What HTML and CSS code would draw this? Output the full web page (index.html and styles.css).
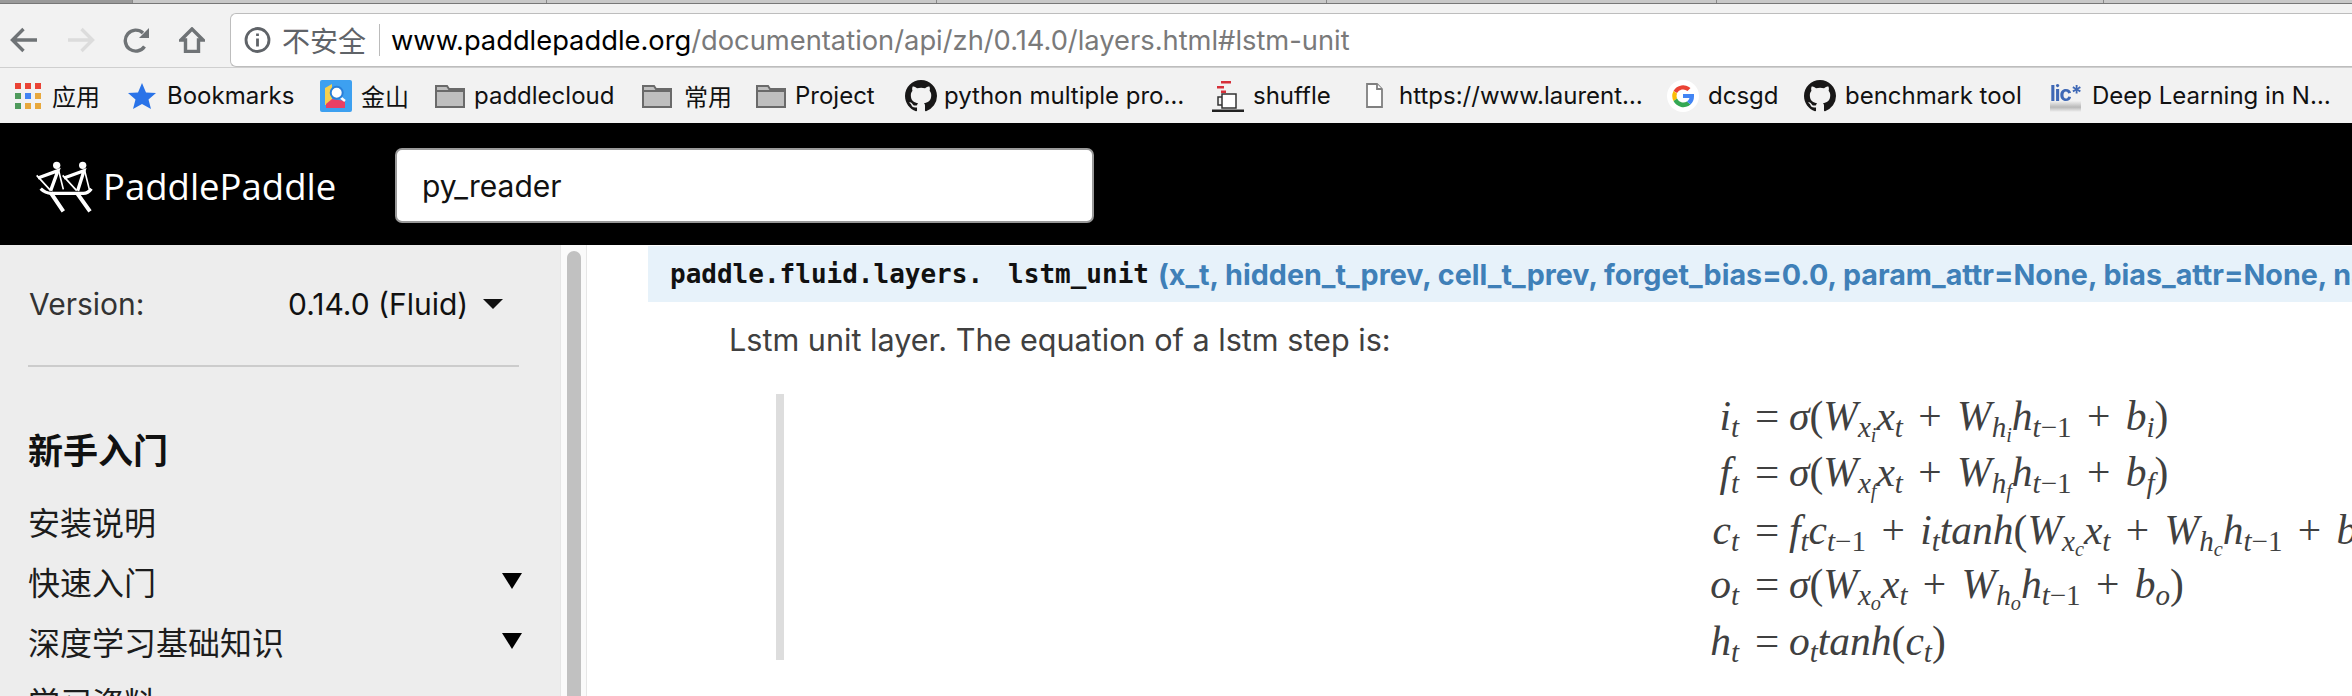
FILE: index.html
```html
<!DOCTYPE html>
<html lang="zh">
<head>
<meta charset="utf-8">
<title>PaddlePaddle</title>
<link rel="stylesheet" href="styles.css">
</head>
<body>
<div class="tabstrip"><div class="tab tab-a"></div><div class="tab tab-b"></div><div class="tab tab-c"></div><div class="tab tab-c"></div><div class="tab tab-c"></div><div class="tab tab-d"></div><div class="tab tab-e"></div></div>
<div class="toolbar">
  <div class="navs">
    <svg class="nav back" viewBox="0 0 28 26"><path d="M27 13H3M13.500 2L2.500 13L13.500 24"/></svg>
    <svg class="nav fwd" viewBox="0 0 28 26"><path d="M1 13H25M14.500 2L25.500 13L14.500 24"/></svg>
    <svg class="nav reload" viewBox="0 0 28 26"><path d="M22.500 19.500A10.500 10.500 0 1 1 21 6"/><path class="fill" d="M27 1V11H17Z"/></svg>
    <svg class="nav home" viewBox="0 0 26 26"><path d="M13 2L2 13H6.500V24.500H19.500V13H24Z"/></svg>
  </div>
  <div class="omnibox">
    <svg class="info" viewBox="0 0 26 26"><circle cx="13" cy="13" r="11.500"/><path d="M13 11.500V19.500M13 6.500V9"/></svg>
    <span class="insecure">不安全</span>
    <span class="divider"></span>
    <span class="url"><b>www.paddlepaddle.org</b>/documentation/api/zh/0.14.0/layers.html#lstm-unit</span>
  </div>
</div>
<div class="bookmarks">
  <div class="bm bm-apps">
    <svg class="ic-apps" viewBox="0 0 26 26">
      <rect class="r" x="0" y="0" width="6" height="6"/><rect class="r" x="10" y="0" width="6" height="6"/><rect class="r" x="20" y="0" width="6" height="6"/>
      <rect class="g" x="0" y="10" width="6" height="6"/><rect class="b" x="10" y="10" width="6" height="6"/><rect class="y" x="20" y="10" width="6" height="6"/>
      <rect class="g" x="0" y="20" width="6" height="6"/><rect class="y" x="10" y="20" width="6" height="6"/><rect class="y" x="20" y="20" width="6" height="6"/>
    </svg>
    <span>应用</span>
  </div>
  <div class="bm bm-star">
    <svg class="ic-star" viewBox="0 0 28 26"><path d="M14 0L18 9.500L28 10L20.500 16.500L23 26L14 21L5 26L7.500 16.500L0 10L10 9.500Z"/></svg>
    <span>Bookmarks</span>
  </div>
  <div class="bm bm-ks">
    <svg class="ic-ks" viewBox="0 0 32 32">
      <rect width="32" height="32" rx="2" fill="#3da0f0"/>
      <path d="M5 8L12 4V25H5Z" fill="#f6d04d"/>
      <path d="M6 28V24L12 19L25 21V28Z" fill="#ea3f64"/>
      <path d="M20 17L25 21" stroke="#fff" stroke-width="2.500"/>
      <circle cx="16.700" cy="12.700" r="6" fill="#fff" stroke="#2a7fd8" stroke-width="2"/>
    </svg>
    <span>金山</span>
  </div>
  <div class="bm bm-f1">
    <svg class="ic-folder" viewBox="0 0 30 24"><path d="M1 23V2H12L14 5H29V23Z"/><path class="ln" d="M1 7H29"/></svg>
    <span>paddlecloud</span>
  </div>
  <div class="bm bm-f2">
    <svg class="ic-folder" viewBox="0 0 30 24"><path d="M1 23V2H12L14 5H29V23Z"/><path class="ln" d="M1 7H29"/></svg>
    <span>常用</span>
  </div>
  <div class="bm bm-f3">
    <svg class="ic-folder" viewBox="0 0 30 24"><path d="M1 23V2H12L14 5H29V23Z"/><path class="ln" d="M1 7H29"/></svg>
    <span>Project</span>
  </div>
  <div class="bm bm-gh1">
    <svg class="ic-gh" viewBox="0 0 16 16"><path d="M8 0C3.580 0 0 3.580 0 8c0 3.540 2.290 6.530 5.470 7.590.4.070.55-.170.55-.380 0-.190-.010-.820-.010-1.490-2.010.370-2.530-.490-2.690-.940-.090-.230-.480-.940-.820-1.130-.280-.150-.680-.520-.010-.530.630-.010 1.080.580 1.230.820.720 1.210 1.870.870 2.330.660.070-.520.280-.870.510-1.070-1.780-.200-3.640-.890-3.640-3.950 0-.870.310-1.590.820-2.150-.080-.200-.360-1.020.080-2.120 0 0 .670-.210 2.200.820.640-.180 1.320-.270 2-.270.680 0 1.360.090 2 .270 1.530-1.040 2.200-.820 2.200-.820.440 1.100.160 1.920.080 2.120.510.560.820 1.270.820 2.150 0 3.070-1.870 3.750-3.650 3.950.290.250.540.730.540 1.480 0 1.070-.010 1.930-.010 2.200 0 .210.150.460.550.380A8.013 8.013 0 0 0 16 8c0-4.420-3.580-8-8-8z"/></svg>
    <span>python multiple pro…</span>
  </div>
  <div class="bm bm-sh">
    <svg class="ic-shuffle" viewBox="0 0 32 32">
      <path d="M9 1H19V3.500H9ZM5 6H12V8.500H5ZM9 10.500H14V13H9Z" fill="#d6303a"/>
      <path d="M10 14H24V28H10Z" fill="#fff" stroke="#333" stroke-width="1.500"/>
      <path d="M10 17H6V25H10" fill="none" stroke="#333" stroke-width="1.500"/>
      <path d="M0 29.500H32V32H0Z" fill="#222"/>
    </svg>
    <span>shuffle</span>
  </div>
  <div class="bm bm-doc">
    <svg class="ic-doc" viewBox="0 0 17 25"><path d="M1 1H11L16 6V24H1Z"/><path d="M11 1V6H16"/></svg>
    <span>https://www.laurent…</span>
  </div>
  <div class="bm bm-g">
    <svg class="ic-g" viewBox="0 0 32 32">
      <circle cx="16" cy="16" r="16" fill="#fff"/>
      <path d="M6.500 11A11 11 0 0 1 23.500 8L20.500 11A7 7 0 0 0 10 13Z" fill="#ea4335"/>
      <path d="M6.500 11L10 13.500A7 7 0 0 0 10 18.500L6.500 21A11 11 0 0 1 6.500 11Z" fill="#fbbc05"/>
      <path d="M6.500 21L10 18.500A7 7 0 0 0 20 21.500L23.500 24.500A11 11 0 0 1 6.500 21Z" fill="#34a853"/>
      <path d="M16 14H27V16.500A11 11 0 0 1 23.500 24.500L20 21.500A7 7 0 0 0 22.500 18H16Z" fill="#4285f4"/>
    </svg>
    <span>dcsgd</span>
  </div>
  <div class="bm bm-gh2">
    <svg class="ic-gh" viewBox="0 0 16 16"><path d="M8 0C3.580 0 0 3.580 0 8c0 3.540 2.290 6.530 5.470 7.590.4.070.55-.170.55-.380 0-.190-.010-.820-.010-1.490-2.010.370-2.530-.490-2.690-.940-.090-.230-.480-.940-.820-1.130-.280-.150-.680-.520-.010-.530.630-.010 1.080.580 1.230.820.720 1.210 1.870.870 2.330.660.070-.520.280-.870.510-1.070-1.780-.200-3.640-.890-3.640-3.950 0-.870.310-1.590.820-2.150-.080-.200-.360-1.020.080-2.120 0 0 .670-.210 2.200.820.640-.180 1.320-.270 2-.270.680 0 1.360.090 2 .270 1.530-1.040 2.200-.820 2.200-.820.440 1.100.160 1.920.080 2.120.510.560.820 1.270.820 2.150 0 3.070-1.870 3.750-3.650 3.950.290.250.540.730.540 1.480 0 1.070-.010 1.930-.010 2.200 0 .210.150.460.550.380A8.013 8.013 0 0 0 16 8c0-4.420-3.580-8-8-8z"/></svg>
    <span>benchmark tool</span>
  </div>
  <div class="bm bm-lic">
    <span class="ic-lic">lic*</span>
    <span>Deep Learning in N…</span>
  </div>
</div>
<header class="site-head">
  <svg class="logo" viewBox="0 0 210 180">
    <circle cx="80" cy="28" r="11"/><circle cx="158" cy="28" r="11"/>
    <path class="mid" d="M24 66L84 44L62 104M102 66L162 44L143 104"/>
    <path class="thin" d="M20 58L62 104M98 58L140 104M86 44L100 100M164 44L178 100"/>
    <path class="mid" d="M32 98Q46 112 64 112H160Q174 112 184 98"/>
    <path class="oar" d="M62 110L100 166M140 110L180 166"/>
  </svg>
  <span class="brand">PaddlePaddle</span>
  <div class="search">py_reader</div>
</header>
<div class="page">
  <aside class="side">
    <div class="version">
      <span class="v-label">Version:</span>
      <span class="v-val">0.14.0 (Fluid)</span>
      <span class="caret"></span>
    </div>
    <div class="rule"></div>
    <h3 class="nav-title">新手入门</h3>
    <ul class="nav-list">
      <li>安装说明</li>
      <li>快速入门<span class="arrow"></span></li>
      <li>深度学习基础知识<span class="arrow"></span></li>
      <li>学习资料</li>
    </ul>
  </aside>
  <div class="track"><div class="thumb"></div></div>
  <main class="main">
    <div class="sig"><code class="pre">paddle.fluid.layers.</code><code class="fn">lstm_unit</code><span class="params">(x_t, hidden_t_prev, cell_t_prev, forget_bias=0.0, param_attr=None, bias_attr=None, name=None)</span></div>
    <p class="desc">Lstm unit layer. The equation of a lstm step is:</p>
    <div class="quote">
      <div class="math">
        <div class="row r1"><span class="lhs"><i>i<sub>t</sub></i></span><span class="eq">=</span><span class="rhs"><i>σ</i>(<i>W<sub>x<sub>i</sub></sub>x<sub>t</sub></i> + <i>W<sub>h<sub>i</sub></sub>h<sub>t</sub></i><sub class="up">−1</sub> + <i>b<sub>i</sub></i>)</span></div>
        <div class="row r2"><span class="lhs"><i>f<sub>t</sub></i></span><span class="eq">=</span><span class="rhs"><i>σ</i>(<i>W<sub>x<sub>f</sub></sub>x<sub>t</sub></i> + <i>W<sub>h<sub>f</sub></sub>h<sub>t</sub></i><sub class="up">−1</sub> + <i>b<sub>f</sub></i>)</span></div>
        <div class="row r3"><span class="lhs"><i>c<sub>t</sub></i></span><span class="eq">=</span><span class="rhs"><i>f<sub>t</sub>c<sub>t</sub></i><sub class="up">−1</sub> + <i>i<sub>t</sub>tanh</i>(<i>W<sub>x<sub>c</sub></sub>x<sub>t</sub></i> + <i>W<sub>h<sub>c</sub></sub>h<sub>t</sub></i><sub class="up">−1</sub> + <i>b<sub>c</sub></i>)</span></div>
        <div class="row r4"><span class="lhs"><i>o<sub>t</sub></i></span><span class="eq">=</span><span class="rhs"><i>σ</i>(<i>W<sub>x<sub>o</sub></sub>x<sub>t</sub></i> + <i>W<sub>h<sub>o</sub></sub>h<sub>t</sub></i><sub class="up">−1</sub> + <i>b<sub>o</sub></i>)</span></div>
        <div class="row r5"><span class="lhs"><i>h<sub>t</sub></i></span><span class="eq">=</span><span class="rhs"><i>o<sub>t</sub>tanh</i>(<i>c<sub>t</sub></i>)</span></div>
      </div>
    </div>
  </main>
</div>
</body>
</html>
```

FILE: styles.css
```css
* { box-sizing: border-box; }
html, body { margin: 0; padding: 0; }
body {
  width: 2352px;
  height: 696px;
  overflow: hidden;
  background: #fff;
  font-family: "Inter", "Noto Sans CJK SC", sans-serif;
}

/* browser chrome */
.tabstrip {
  height: 4px;
  display: flex;
  background: #c8c8c8;
  border-bottom: 1px solid #777;
}
.tab { border-right: 1px solid #8a8a8a; }
.tab-a { width: 133px; background: #9a9a9a; }
.tab-b { width: 414px; }
.tab-c { width: 390px; }
.tab-d { width: 387px; }
.tab-e { flex: 1; border-right: 0; }
.toolbar {
  height: 63px;
  display: flex;
  align-items: flex-start;
  padding-top: 9px;
  background: #f2f2f2;
}
.navs {
  width: 230px;
  height: 54px;
  flex: none;
  display: flex;
  align-items: center;
  padding-left: 10px;
}
.nav {
  fill: none;
  stroke: #6f7376;
  stroke-width: 3.400;
}
.nav .fill { fill: #6f7376; stroke: none; }
.back { width: 28px; height: 26px; }
.fwd { width: 28px; height: 26px; margin-left: 29px; stroke: #dcdcdc; }
.reload { width: 28px; height: 26px; margin-left: 27px; }
.home { width: 26px; height: 26px; margin-left: 29px; }
.omnibox {
  flex: 1;
  height: 54px;
  display: flex;
  align-items: center;
  padding-left: 13px;
  background: #fff;
  border: 1px solid #bdbdbd;
  border-right: 0;
  border-radius: 6px 0 0 6px;
}
.info {
  width: 27px;
  height: 26px;
  fill: none;
  stroke: #5f6368;
  stroke-width: 2.800;
}
.insecure {
  margin-left: 11px;
  font-size: 28px;
  color: #5f6368;
  font-family: "Noto Sans CJK SC", sans-serif;
}
.divider {
  width: 1px;
  height: 32px;
  margin-left: 13px;
  background: #bbb;
}
.url {
  margin-left: 11px;
  font-size: 27.300px;
  color: #7a7a7a;
  white-space: nowrap;
}
.url b { font-weight: 400; color: #000; }

.bookmarks {
  height: 56px;
  display: flex;
  align-items: center;
  padding-left: 15px;
  background: #f2f2f2;
  border-top: 1px solid #cfcfcf;
  font-size: 24px;
  color: #111;
  white-space: nowrap;
}
.bm { display: flex; align-items: center; flex: none; }
.bm-apps { width: 113px; gap: 11px; }
.bm-star { width: 192px; gap: 11px; }
.bm-ks { width: 115px; gap: 9px; }
.bm-f1 { width: 207px; gap: 9px; }
.bm-f2 { width: 114px; gap: 12px; }
.bm-f3 { width: 149px; gap: 9px; }
.bm-gh1 { width: 307px; gap: 7px; }
.bm-sh { width: 154px; gap: 9px; }
.bm-doc { width: 301px; gap: 16px; }
.bm-g { width: 137px; gap: 9px; }
.bm-gh2 { width: 246px; gap: 9px; }
.bm-lic { width: 290px; gap: 11px; }
.ic-apps { width: 26px; height: 26px; }
.ic-apps .r { fill: #ea4335; }
.ic-apps .g { fill: #4f9a5c; }
.ic-apps .b { fill: #4285f4; }
.ic-apps .y { fill: #e8a83c; }
.ic-star { width: 28px; height: 26px; fill: #2a73e8; }
.ic-ks { width: 32px; height: 32px; }
.ic-folder {
  width: 30px;
  height: 24px;
  fill: #bfbfbf;
  stroke: #6a6a6a;
  stroke-width: 2;
}
.ic-folder .ln { fill: none; }
.ic-gh { width: 32px; height: 32px; fill: #181717; }
.ic-shuffle { width: 32px; height: 32px; }
.ic-doc {
  width: 17px;
  height: 25px;
  fill: #fff;
  stroke: #808080;
  stroke-width: 1.800;
}
.ic-g { width: 32px; height: 32px; }
.ic-lic {
  width: 31px;
  height: 32px;
  font-size: 21px;
  font-weight: 700;
  letter-spacing: -1px;
  line-height: 28px;
  color: #3f68b5;
  background: linear-gradient(#f2f2f2 65%, #b8b8b8 85%, #f2f2f2);
  filter: blur(0.6px);
  overflow: hidden;
}

/* site header */
.site-head {
  height: 122px;
  padding-top: 3px;
  display: flex;
  align-items: center;
  background: #000;
  color: #fff;
}
.logo {
  width: 70px;
  height: 60px;
  margin-left: 30px;
  flex: none;
  fill: #fff;
  stroke: none;
}
.logo .thin, .logo .mid, .logo .oar { fill: none; stroke: #fff; }
.logo .thin { stroke-width: 5; }
.logo .mid { stroke-width: 10; }
.logo .oar { stroke-width: 12; }
.brand {
  margin-left: 3px;
  width: 292px;
  flex: none;
  font-family: "Open Sans", sans-serif;
  font-weight: 400;
  font-size: 36.500px;
}
.search {
  width: 699px;
  height: 75px;
  padding-left: 25px;
  display: flex;
  align-items: center;
  background: #fff;
  border: 2px solid #999;
  border-radius: 7px;
  color: #111;
  font-size: 30px;
}

/* page body */
.page { display: flex; height: 451px; }
.side {
  width: 560px;
  flex: none;
  padding: 0 41px 0 28px;
  background: #ededed;
  color: #1c1c1c;
  overflow: hidden;
}
.version {
  display: flex;
  align-items: center;
  height: 40px;
  margin-top: 39px;
  font-size: 30px;
}
.v-label { width: 260px; color: #333; padding-left: 1px; }
.v-val { width: 195px; color: #111; white-space: nowrap; }
.caret {
  width: 0;
  height: 0;
  border-left: 10px solid transparent;
  border-right: 10px solid transparent;
  border-top: 10px solid #111;
}
.rule { height: 2px; margin-top: 41px; background: #ccc; }
.nav-title {
  margin: 57px 0 0;
  font-family: "Noto Sans CJK SC", sans-serif;
  font-weight: 700;
  font-size: 35px;
  line-height: 50px;
  color: #111;
}
.nav-list {
  list-style: none;
  margin: 17px 0 0;
  padding: 0;
  font-family: "Noto Sans CJK SC", sans-serif;
  font-size: 32px;
}
.nav-list li {
  position: relative;
  height: 60px;
  line-height: 60px;
}
.arrow {
  position: absolute;
  right: -3px;
  top: 22px;
  width: 0;
  height: 0;
  border-left: 10px solid transparent;
  border-right: 10px solid transparent;
  border-top: 16px solid #000;
}
.track {
  width: 27px;
  flex: none;
  padding: 6px 5px 0 6px;
  background: #fafafa;
  border-left: 1px solid #e6e6e6;
  border-right: 1px solid #e6e6e6;
}
.thumb { height: 100%; background: #c1c1c1; border-radius: 8px 8px 0 0; }
.main { flex: 1; min-width: 0; overflow: hidden; padding-left: 61px; }
.sig {
  height: 56px;
  margin-top: 1px;
  padding-left: 22px;
  display: flex;
  align-items: center;
  background: #e7f2fa;
  white-space: nowrap;
}
.pre, .fn {
  font-family: "DejaVu Sans Mono", monospace;
  font-weight: 700;
  font-size: 26px;
  color: #111;
}
.fn { margin-left: 25px; }
.params {
  margin-left: 9px;
  font-weight: 700;
  font-size: 28.700px;
  color: #3f80b8;
}
.desc {
  margin: 0;
  height: 76px;
  padding: 18px 0 0 81px;
  font-size: 30.600px;
  line-height: 40px;
  color: #404040;
}
.quote {
  margin: 16px 0 0 128px;
  height: 266px;
  border-left: 8px solid #ddd;
}
.math {
  font-family: "Liberation Serif", serif;
  font-size: 41.500px;
  color: #404040;
  white-space: nowrap;
}
.row {
  display: flex;
  align-items: baseline;
  line-height: 44px;
}
.r1 { height: 56px; }
.r2 { height: 58px; }
.r3 { height: 54px; }
.r4 { height: 57px; }
.lhs { flex: none; width: 955px; text-align: right; }
.eq { flex: none; margin-left: 16px; width: 34px; font-size: 43px; }
.rhs { flex: none; word-spacing: 5px; }
sub { font-size: 70%; line-height: 0; vertical-align: -0.250em; }
sub.up { font-style: normal; }
```
